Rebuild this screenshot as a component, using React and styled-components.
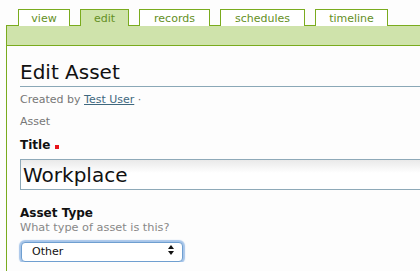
import React from 'react';
import styled, { createGlobalStyle } from 'styled-components';

const Global = createGlobalStyle`
html, body {
  margin: 0;
  padding: 0;
  overflow: hidden;
  background: #fdfdfd;
  font-family: "DejaVu Sans", Verdana, sans-serif;
}
`

const Page = styled.div`
padding-left: 6px;
height: 271px;
display: flex;
flex-direction: column;
`

const TabBar = styled.div`
display: flex;
gap: 10px;
padding: 9px 0 0 12px;
position: relative;
z-index: 1;
`

const Tab = styled.div`
box-sizing: border-box;
width: ${p => p.w}px;
height: 17px;
padding-top: 1px;
border: 1px solid #7aab1e;
border-bottom: none;
margin-bottom: -1px;
background: ${p => (p.active ? '#cfe3ab' : '#ffffff')};
color: #648f24;
font-size: 11px;
line-height: 15px;
text-align: center;
`

const Panel = styled.div`
flex: 1;
border-left: 1px solid #7aab1e;
display: flex;
flex-direction: column;
`

const Bar = styled.div`
height: 19px;
background: #cfe3ab;
border-top: 1px solid #7aab1e;
border-bottom: 1px solid #7aab1e;
`

const Content = styled.div`
padding: 14px 0 0 13px;
overflow: hidden;
`

const Heading = styled.h1`
margin: 0;
font-size: 20px;
font-weight: normal;
color: #111;
line-height: 24px;
padding-bottom: 2px;
border-bottom: 1px solid #8aa8b7;
`

const Meta = styled.div`
font-size: 11px;
color: #777;
margin-top: ${p => p.gap || 0}px;
line-height: 14px;
`

const Link = styled.a`
color: #3f687e;
text-decoration: underline;
`

const Label = styled.div`
font-size: 12px;
font-weight: bold;
color: #111;
margin-top: ${p => p.gap || 0}px;
line-height: 15px;
display: flex;
align-items: center;
gap: 5px;
`

const Required = styled.span`
width: 4px;
height: 4px;
background: #e8141b;
margin-top: 2px;
`

const Hint = styled.div`
font-size: 11.3px;
color: #888;
line-height: 14px;
`

const TextInput = styled.input`
display: block;
box-sizing: border-box;
width: 150%;
height: 31px;
margin-top: 6px;
padding: 0 2px;
border: 1px solid #8ea9b8;
background: linear-gradient(#e9e9e9, #ffffff 45%);
font-family: "DejaVu Sans", Verdana, sans-serif;
font-size: 20px;
color: #111;
outline: none;
`

const SelectWrap = styled.div`
position: relative;
width: 162px;
margin-top: 5px;
margin-left: 1px;
`

const Select = styled.select`
appearance: none;
box-sizing: border-box;
width: 100%;
height: 20px;
padding: 0 0 0 10px;
border: 1px solid #6f9fd0;
border-radius: 4px;
box-shadow: 0 0 1px 2px rgba(110, 160, 220, 0.6);
background: #fff;
font-family: "DejaVu Sans", Verdana, sans-serif;
font-size: 11px;
color: #111;
outline: none;
`

const Arrows = styled.svg`
position: absolute;
right: 9px;
top: 5px;
pointer-events: none;
`

const tabs = [
  { name: 'view', w: 52 },
  { name: 'edit', w: 49 },
  { name: 'records', w: 71 },
  { name: 'schedules', w: 85 },
  { name: 'timeline', w: 73 },
];

const App = () => (
  <Page>
    <Global />
    <TabBar>
      {tabs.map(t => (
        <Tab key={t.name} w={t.w} active={t.name === 'edit'}>{t.name}</Tab>
      ))}
    </TabBar>
    <Panel>
      <Bar />
      <Content>
        <Heading>Edit Asset</Heading>
        <Meta gap={6}>Created by <Link href="#">Test User</Link> ·</Meta>
        <Meta gap={8}>Asset</Meta>
        <Label gap={9}>Title <Required /></Label>
        <TextInput defaultValue="Workplace" />
        <Label gap={16}>Asset Type</Label>
        <Hint>What type of asset is this?</Hint>
        <SelectWrap>
          <Select defaultValue="Other">
            <option>Other</option>
          </Select>
          <Arrows width="6" height="10" viewBox="0 0 6 10">
            <path d="M3 0 L6 4 L0 4 Z M3 10 L6 6 L0 6 Z" fill="#111" />
          </Arrows>
        </SelectWrap>
      </Content>
    </Panel>
  </Page>
);

export default App;
